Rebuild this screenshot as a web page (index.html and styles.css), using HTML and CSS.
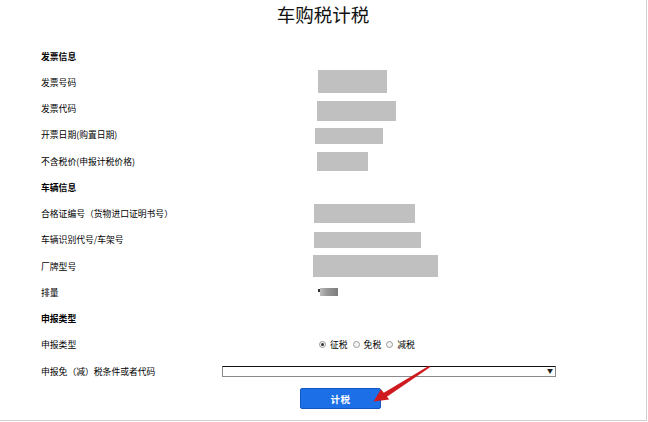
FILE: index.html
```html
<!DOCTYPE html>
<html lang="zh-CN">
<head>
<meta charset="utf-8">
<title>车购税计税</title>
<link rel="stylesheet" href="styles.css">
</head>
<body>
<div class="page">
  <h1 class="title">车购税计税</h1>
  <div class="form">
    <div class="row section"><span class="label">发票信息</span></div>
    <div class="row"><span class="label">发票号码</span><span class="val"><span class="mask m1"></span></span></div>
    <div class="row"><span class="label">发票代码</span><span class="val"><span class="mask m2"></span></span></div>
    <div class="row"><span class="label">开票日期(购置日期)</span><span class="val"><span class="mask m3"></span></span></div>
    <div class="row"><span class="label">不含税价(申报计税价格)</span><span class="val"><span class="mask m4"></span></span></div>
    <div class="row section"><span class="label">车辆信息</span></div>
    <div class="row"><span class="label">合格证编号（货物进口证明书号）</span><span class="val"><span class="mask m5"></span></span></div>
    <div class="row"><span class="label">车辆识别代号/车架号</span><span class="val"><span class="mask m6"></span></span></div>
    <div class="row"><span class="label">厂牌型号</span><span class="val"><span class="mask m7"></span></span></div>
    <div class="row"><span class="label">排量</span><span class="val"><span class="chip"></span></span></div>
    <div class="row section"><span class="label">申报类型</span></div>
    <div class="row"><span class="label">申报类型</span>
      <span class="val radios">
        <span class="radio checked"></span><span class="opt">征税</span>
        <span class="radio"></span><span class="opt">免税</span>
        <span class="radio"></span><span class="opt">减税</span>
      </span>
    </div>
    <div class="row"><span class="label">申报免（减）税条件或者代码</span>
      <span class="select"><span class="caret">▼</span></span>
    </div>
  </div>
  <div class="actions"><button class="btn" type="button">计税</button></div>
  <svg class="pointer" width="648" height="422" viewBox="0 0 648 422" aria-hidden="true">
    <polygon points="429,365.8 430,367.2 386.2,397.2 383.4,393" fill="#cf1a1f"/>
    <polygon points="373.5,401.5 381,389.2 389.2,399.6" fill="#cf1a1f"/>
  </svg>
</div>
</body>
</html>
```

FILE: styles.css
```css
* { box-sizing: border-box; }
html, body { margin: 0; padding: 0; background: #fff; }
body {
  font-family: "Noto Sans CJK SC", "Noto Sans", sans-serif;
  color: #000;
}
.page {
  position: relative;
  width: 647px;
  height: 421px;
  border-right: 1px solid #cfcfcf;
  border-bottom: 1px solid #cfcfcf;
  overflow: hidden;
}
.title {
  margin: 0;
  height: 28px;
  line-height: 28px;
  text-align: center;
  font-size: 18.5px;
  font-weight: normal;
  color: #111;
}
.form {
  margin-top: 15px;
  padding-left: 41px;
}
.row {
  display: grid;
  grid-template-columns: 181px 91px 1fr;
  align-items: center;
  height: 26.25px;
  font-size: 8.8px;
}
.label { grid-column: 1; white-space: nowrap; }
.section .label { font-weight: bold; }
.val { grid-column: 3; display: flex; align-items: center; }
.mask { display: block; background: #c0c0c0; }
.m1 { width: 69px; height: 23px; margin-left: 5px; margin-top: -1px; }
.m2 { width: 79px; height: 20px; margin-left: 4px; margin-top: 4px; }
.m3 { width: 68px; height: 16px; margin-left: 2px; margin-top: 2px; }
.m4 { width: 51px; height: 19px; margin-left: 4px; }
.m5 { width: 101px; height: 19px; margin-left: 1px; }
.m6 { width: 107px; height: 16px; margin-left: 1px; }
.m7 { width: 125px; height: 22px; margin-left: 0; }
.chip {
  position: relative;
  display: block;
  width: 18px;
  height: 8px;
  margin-left: 7px;
  margin-top: -1px;
  background: linear-gradient(90deg, #bdbdbd 0%, #9a9a9a 35%, #7c7c7c 100%);
}
.chip::before {
  content: "";
  position: absolute;
  left: -2px;
  top: 1px;
  width: 2px;
  height: 3px;
  background: #333;
}
.radios { padding-left: 6px; gap: 0; }
.radio {
  display: block;
  width: 7px;
  height: 7px;
  border: 1px solid #9a9a9a;
  border-radius: 50%;
  background: #f4f4f4;
  margin-right: 4px;
  position: relative;
}
.radio.checked::after {
  content: "";
  position: absolute;
  left: 1px;
  top: 1px;
  width: 3px;
  height: 3px;
  border-radius: 50%;
  background: #333;
}
.opt { margin-right: 5px; font-size: 8.8px; }
.select {
  grid-column: 2 / 4;
  position: relative;
  display: block;
  width: 334px;
  height: 11px;
  margin-top: 1px;
  border: 1px solid #8a8a8a;
  border-top-color: #111;
  background: #fff;
}
.caret {
  position: absolute;
  right: 2px;
  top: -1px;
  font-size: 6px;
  line-height: 10px;
  color: #222;
}
.actions {
  padding-left: 300px;
  margin-top: 4px;
}
.btn {
  display: block;
  width: 81px;
  height: 21px;
  padding: 0;
  border: 1px solid #1457c0;
  border-radius: 2px;
  background: #1c6fe6;
  color: #fff;
  font-family: "Noto Sans CJK SC", sans-serif;
  font-size: 9.5px;
  font-weight: bold;
  letter-spacing: 0.5px;
}
.pointer {
  position: absolute;
  left: 0;
  top: 0;
  pointer-events: none;
}
```
